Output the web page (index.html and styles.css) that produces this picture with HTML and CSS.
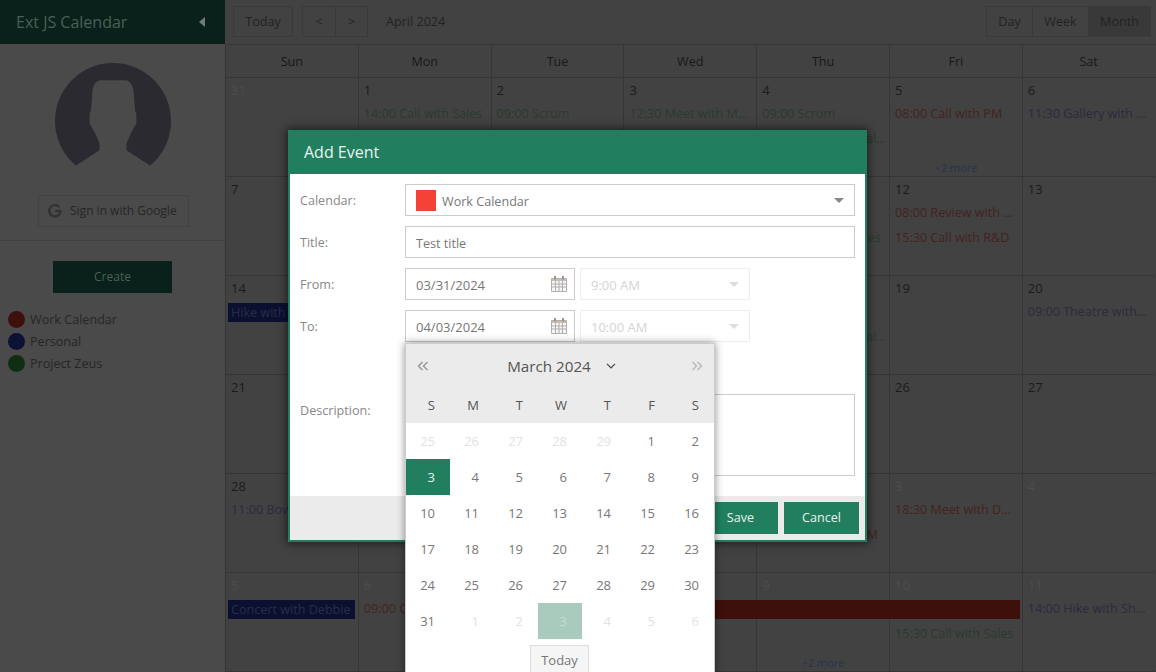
FILE: index.html
```html
<!DOCTYPE html>
<html lang="en">
<head>
    <meta charset="UTF-8">
    <title>Ext JS Calendar</title>
    <link rel="stylesheet" href="styles.css">
</head>
<body>
<div class="app">
    <div class="side">
        <div class="side-head">
            <span class="side-title">Ext JS Calendar</span>
            <span class="collapse"></span>
        </div>
        <div class="profile">
            <svg class="avatar" width="116" height="116" viewBox="0 0 116 116">
                <circle cx="58" cy="58" r="58" fill="#2a2a30"/>
                <path fill="#4a4a4a" d="M46 17.300H70C76 17.300 79 24 79 34L80 47.300 81.400 50.700V60.600L75.700 70.600 71.400 80.600V87.300L94.700 102.300V116H21.300V102.300L44.600 87.300V80.600L40.300 70.600 34.600 60.600V50.700L36 47.300 37 34C37 24 40 17.300 46 17.300Z"/>
            </svg>
            <div class="google-btn">
                <svg width="14" height="14" viewBox="0 0 14 14">
                    <path fill="none" stroke="#333" stroke-width="2.4" d="M11.200 3A5.700 5.700 0 1 0 12.600 7H7.200"/>
                </svg>
                <span>Sign in with Google</span>
            </div>
        </div>
        <div class="side-bottom">
            <div class="create-btn">Create</div>
            <ul class="legend">
                <li><i class="dot dot-red"></i>Work Calendar</li>
                <li><i class="dot dot-blue"></i>Personal</li>
                <li><i class="dot dot-green"></i>Project Zeus</li>
            </ul>
        </div>
    </div>

    <div class="main">
        <div class="toolbar">
            <div class="btn-group"><span class="tbtn today">Today</span></div>
            <div class="btn-group nav-group"><span class="tbtn nav">&lt;</span><span class="tbtn nav">&gt;</span></div>
            <span class="period">April 2024</span>
            <div class="btn-group views">
                <span class="tbtn view-day">Day</span><span class="tbtn view-week">Week</span><span class="tbtn view-month active">Month</span>
            </div>
        </div>
        <div class="week-head">
            <div>Sun</div><div>Mon</div><div>Tue</div><div>Wed</div><div>Thu</div><div>Fri</div><div>Sat</div>
        </div>
        <div class="month">
            <div class="day"><span class="num off">31</span></div>
            <div class="day"><span class="num">1</span><div class="ev g">14:00 Call with Sales</div></div>
            <div class="day"><span class="num">2</span><div class="ev g">09:00 Scrum</div></div>
            <div class="day"><span class="num">3</span><div class="ev g">12:30 Meet with Marketing</div></div>
            <div class="day"><span class="num">4</span><div class="ev g">09:00 Scrum</div><div class="ev g long">16:00 Meet with Salary review</div></div>
            <div class="day"><span class="num">5</span><div class="ev r">08:00 Call with PM</div><a class="more">+2 more</a></div>
            <div class="day"><span class="num">6</span><div class="ev b">11:30 Gallery with Susan</div></div>

            <div class="day"><span class="num">7</span></div>
            <div class="day"><span class="num">8</span></div>
            <div class="day"><span class="num">9</span></div>
            <div class="day"><span class="num">10</span></div>
            <div class="day"><span class="num">11</span><div class="ev g">09:00 Scrum</div><div class="ev g">15:30 Call with Sales</div></div>
            <div class="day"><span class="num">12</span><div class="ev r">08:00 Review with Team</div><div class="ev r">15:30 Call with R&amp;D</div></div>
            <div class="day"><span class="num">13</span></div>

            <div class="day"><span class="num">14</span><div class="ev fill-b">Hike with Sarah</div></div>
            <div class="day"><span class="num">15</span></div>
            <div class="day"><span class="num">16</span></div>
            <div class="day"><span class="num">17</span></div>
            <div class="day"><span class="num">18</span><div class="ev g">09:00 Scrum</div><div class="ev g long">16:00 Meet with Salary review</div></div>
            <div class="day"><span class="num">19</span></div>
            <div class="day"><span class="num">20</span><div class="ev b">09:00 Theatre with Debbie</div></div>

            <div class="day"><span class="num">21</span></div>
            <div class="day"><span class="num">22</span></div>
            <div class="day"><span class="num">23</span></div>
            <div class="day"><span class="num">24</span></div>
            <div class="day"><span class="num">25</span></div>
            <div class="day"><span class="num">26</span></div>
            <div class="day"><span class="num">27</span></div>

            <div class="day"><span class="num">28</span><div class="ev b">11:00 Bowling with Dan</div></div>
            <div class="day"><span class="num">29</span></div>
            <div class="day"><span class="num">30</span></div>
            <div class="day"><span class="num off">1</span></div>
            <div class="day"><span class="num off">2</span><div class="ev g">09:00 Scrum</div><div class="ev r">08:00 Meet with PM</div></div>
            <div class="day"><span class="num off">3</span><div class="ev r">18:30 Meet with Design</div></div>
            <div class="day"><span class="num off">4</span></div>

            <div class="day"><span class="num off">5</span><div class="ev fill-b">Concert with Debbie</div></div>
            <div class="day"><span class="num off">6</span><div class="ev r">09:00 Call with PM</div></div>
            <div class="day"><span class="num off">7</span><div class="ev fill-r wide">Conference</div></div>
            <div class="day"><span class="num off">8</span></div>
            <div class="day"><span class="num off">9</span><a class="more">+2 more</a></div>
            <div class="day"><span class="num off">10</span><div class="ev spacer"></div><div class="ev g">15:30 Call with Sales</div></div>
            <div class="day"><span class="num off">11</span><div class="ev b">14:00 Hike with Sharon</div></div>
        </div>
    </div>
</div>

<div class="dialog">
    <div class="dialog-head">Add Event</div>
    <div class="dialog-body">
        <div class="row">
            <label>Calendar:</label>
            <div class="input grow">
                <i class="swatch"></i><span>Work Calendar</span>
                <b class="arrow"></b>
            </div>
        </div>
        <div class="row">
            <label>Title:</label>
            <div class="input grow">Test title</div>
        </div>
        <div class="row">
            <label>From:</label>
            <div class="input date">03/31/2024
                <svg class="cal-icon" width="16" height="17" viewBox="0 0 16 17"><use href="#cal"/></svg>
            </div>
            <div class="input time">9:00 AM<b class="arrow"></b></div>
        </div>
        <div class="row">
            <label>To:</label>
            <div class="input date">04/03/2024
                <svg class="cal-icon" width="16" height="17" viewBox="0 0 16 17"><use href="#cal"/></svg>
            </div>
            <div class="input time">10:00 AM<b class="arrow"></b></div>
        </div>
        <div class="row"></div>
        <div class="row tall">
            <label>Description:</label>
            <div class="input grow"></div>
        </div>
    </div>
    <div class="dialog-foot">
        <span class="green-btn">Save</span>
        <span class="green-btn">Cancel</span>
    </div>
</div>

<div class="picker">
    <div class="picker-head">
        <div class="picker-title">
            <svg width="12" height="10" viewBox="0 0 12 10"><path fill="none" stroke="#999" stroke-width="1.500" d="M5.500 1 1.500 5l4 4M10.500 1l-4 4 4 4"/></svg>
            <span class="month-name">March 2024
                <svg width="10" height="6" viewBox="0 0 10 6"><path fill="none" stroke="#444" stroke-width="1.200" d="M1 .8l4 4 4-4"/></svg>
            </span>
            <svg width="12" height="10" viewBox="0 0 12 10"><path fill="none" stroke="#bbb" stroke-width="1.500" d="M1.500 1l4 4-4 4M6.500 1l4 4-4 4"/></svg>
        </div>
        <div class="picker-days">
            <span>S</span><span>M</span><span>T</span><span>W</span><span>T</span><span>F</span><span>S</span>
        </div>
    </div>
    <div class="picker-grid">
        <span class="out">25</span><span class="out">26</span><span class="out">27</span><span class="out">28</span><span class="out">29</span><span>1</span><span>2</span>
        <span class="sel">3</span><span>4</span><span>5</span><span>6</span><span>7</span><span>8</span><span>9</span>
        <span>10</span><span>11</span><span>12</span><span>13</span><span>14</span><span>15</span><span>16</span>
        <span>17</span><span>18</span><span>19</span><span>20</span><span>21</span><span>22</span><span>23</span>
        <span>24</span><span>25</span><span>26</span><span>27</span><span>28</span><span>29</span><span>30</span>
        <span>31</span><span class="out">1</span><span class="out">2</span><span class="out cur">3</span><span class="out">4</span><span class="out">5</span><span class="out">6</span>
    </div>
    <div class="picker-foot"><span class="today-btn">Today</span></div>
</div>

<svg class="defs" width="0" height="0">
    <symbol id="cal" viewBox="0 0 16 17">
        <path fill="#f4f6fa" d="M1 4h14v12H1z"/>
        <path fill="#c4bcb4" d="M1 3h14v3H1z"/>
        <path fill="none" stroke="#b4aea8" d="M.5 3.500h15v13H.5zM.5 9h15M.5 12h15M4.500 6v10M8 6v10M11.500 6v10"/>
        <path fill="none" stroke="#9a9590" stroke-width="2" d="M4 1v3.500M12 1v3.500"/>
    </symbol>
</svg>
</body>
</html>
```

FILE: styles.css
```css
*{
    margin: 0;
    padding: 0;
    box-sizing: border-box;
}
html, body{
    height: 100%;
    overflow: hidden;
}
body{
    position: relative;
    font-family: "Open Sans", "Noto Sans", sans-serif;
    font-size: 12.6px;
    color: #777;
    background: #424242;
}
.app{
    display: flex;
    height: 672px;
}

/* left column */
.side{
    width: 225px;
    flex: none;
    background: #4a4a4a;
}
.side-head{
    height: 44px;
    padding: 0 20px 0 16px;
    display: flex;
    align-items: center;
    justify-content: space-between;
    background: #09211a;
}
.side-title{
    font-size: 16px;
    color: #495f57;
}
.collapse{
    border-style: solid;
    border-width: 5px 6px 5px 0;
    border-color: transparent #6f7c78 transparent transparent;
}
.profile{
    height: 197px;
    padding-top: 19px;
    display: flex;
    flex-direction: column;
    align-items: center;
    border-bottom: 1px solid #404040;
}
.avatar{
    display: block;
    margin-left: 1px;
}
.google-btn{
    width: 151px;
    height: 32px;
    margin: 16px 0 0 2px;
    padding: 0 0 1px 9px;
    display: flex;
    align-items: center;
    gap: 8px;
    border: 1px solid #424242;
    color: #262626;
    font-size: 12px;
}
.side-bottom{
    padding: 20px 8px 0;
}
.create-btn{
    width: 119px;
    height: 32px;
    margin-left: 45px;
    background: #09211a;
    color: #495f57;
    line-height: 32px;
    text-align: center;
    font-size: 12px;
}
.legend{
    list-style: none;
    margin-top: 15px;
}
.legend li{
    height: 22px;
    display: flex;
    align-items: center;
    gap: 5px;
    color: #262626;
}
.dot{
    width: 17px;
    height: 17px;
    border-radius: 50%;
}
.dot-red{
    background: #3d100c;
}
.dot-blue{
    background: #0d1133;
}
.dot-green{
    background: #0f2e12;
}

/* calendar */
.main{
    flex: 1;
    min-width: 0;
    display: flex;
    flex-direction: column;
}
.toolbar{
    height: 44px;
    flex: none;
    padding: 6px 5px 7px 8px;
    display: flex;
    align-items: stretch;
    color: #222;
}
.btn-group{
    display: flex;
    border: 1px solid #3a3a3a;
}
.nav-group{
    margin-left: 9px;
}
.tbtn{
    display: flex;
    align-items: center;
    justify-content: center;
    border-left: 1px solid #3a3a3a;
}
.tbtn:first-child{
    border-left: 0;
}
.today{
    width: 58px;
}
.nav{
    width: 32px;
}
.period{
    margin-left: 18px;
    align-self: center;
}
.views{
    margin-left: auto;
}
.view-day{
    width: 45px;
}
.view-week{
    width: 56px;
}
.view-month{
    width: 62px;
}
.active{
    background: #393939;
}
.week-head{
    height: 34px;
    flex: none;
    display: grid;
    grid-template-columns: repeat(7, 132.8px);
    border-top: 1px solid #363636;
    border-bottom: 1px solid #363636;
}
.week-head div{
    border-left: 1px solid #363636;
    text-align: center;
    line-height: 33px;
    color: #181818;
}
.month{
    flex: 1;
    display: grid;
    grid-template-columns: repeat(7, 132.8px);
    grid-template-rows: repeat(5, 99px) 1fr;
}
.day{
    min-width: 0;
    display: flex;
    flex-direction: column;
    border-left: 1px solid #363636;
    border-bottom: 1px solid #363636;
}
.num{
    height: 25px;
    padding-left: 5px;
    line-height: 24px;
    color: #1b1b1b;
    font-size: 13px;
}
.num.off{
    color: #4d4d4d;
}
.ev{
    height: 19px;
    margin: 1px 3px 5px 2px;
    padding: 0 3px;
    line-height: 19px;
    white-space: nowrap;
    overflow: hidden;
    text-overflow: ellipsis;
}
.ev.long{
    margin-right: 0;
    padding-right: 0;
}
.g{
    color: #2a3a2c;
}
.b{
    color: #2a2b3e;
}
.r{
    color: #43231f;
}
.fill-b{
    margin: 2px 3px 4px 2px;
    background: #0c1030;
    color: #2a2d4a;
}
.fill-r{
    margin: 2px 3px 4px 2px;
    background: #3d100c;
    color: #3d100c;
}
.wide{
    position: relative;
    width: 526px;
}
.spacer{
    visibility: hidden;
}
.more{
    margin-top: auto;
    padding-bottom: 1px;
    text-align: center;
    font-size: 11px;
    color: #26334f;
}

/* add event window */
.dialog{
    position: absolute;
    left: 288px;
    top: 130px;
    width: 579px;
    height: 412px;
    display: flex;
    flex-direction: column;
    background: #217f5f;
    box-shadow: 0 0 8px 2px rgba(0, 0, 0, .5);
}
.dialog-head{
    height: 44px;
    flex: none;
    padding-left: 16px;
    line-height: 44px;
    font-size: 16px;
    color: #e8f3ef;
}
.dialog-body{
    flex: 1;
    margin: 0 2px;
    padding: 10px;
    display: flex;
    flex-direction: column;
    gap: 10px;
    background: #fff;
}
.row{
    height: 32px;
    flex: none;
    display: flex;
    gap: 5px;
}
.row.tall{
    height: 82px;
}
.row label{
    width: 100px;
    line-height: 34px;
    color: #888;
}
.input{
    position: relative;
    padding: 2px 0 0 10px;
    display: flex;
    align-items: center;
    border: 1px solid #ccc;
    line-height: 28px;
    color: #777;
}
.grow{
    flex: 1;
    padding-top: 3px;
}
.date{
    width: 170px;
    font-size: 13px;
}
.time{
    width: 170px;
    border-color: #eee;
    color: #d4d4d4;
    font-size: 13px;
}
.swatch{
    width: 20px;
    height: 21px;
    margin: -3px 6px 0 0;
    background: #f44336;
}
.arrow{
    position: absolute;
    right: 10px;
    top: 13px;
    border-style: solid;
    border-width: 5px 5px 0;
    border-color: #888 transparent transparent;
}
.time .arrow{
    border-top-color: #ddd;
}
.cal-icon{
    position: absolute;
    right: 7px;
    top: 6px;
}
.dialog-foot{
    height: 44px;
    flex: none;
    margin: 0 2px 2px;
    padding: 6px;
    display: flex;
    justify-content: flex-end;
    gap: 6px;
    background: #ebebeb;
}
.green-btn{
    width: 75px;
    background: #217f5f;
    color: #e8f3ef;
    line-height: 32px;
    text-align: center;
}

/* date picker popup */
.picker{
    position: absolute;
    left: 405px;
    top: 343px;
    width: 310px;
    height: 345px;
    border: 1px solid #ccc;
    background: #fff;
    box-shadow: 0 0 8px rgba(0, 0, 0, .45);
    font-size: 13px;
}
.picker-head{
    height: 79px;
    background: #ebebeb;
}
.picker-title{
    height: 43px;
    padding: 0 11px;
    display: flex;
    align-items: center;
    justify-content: space-between;
}
.month-name{
    margin-left: 3px;
    font-size: 15.2px;
    color: #555;
    display: flex;
    align-items: center;
    gap: 15px;
}
.picker-days, .picker-grid{
    display: grid;
    grid-template-columns: repeat(7, 44px);
    text-align: right;
}
.picker-days span{
    padding-right: 15px;
    line-height: 36px;
    color: #555;
}
.picker-grid span{
    height: 36px;
    padding-right: 15px;
    line-height: 36px;
    color: #777;
}
.picker-grid .out{
    color: #e2e2e2;
}
.picker-grid .sel{
    background: #217f5f;
    color: #e8f3ef;
}
.picker-grid .cur{
    background: #a9cbbd;
    color: #c4dcd2;
}
.picker-foot{
    padding: 6px 1px 0 0;
    text-align: center;
}
.today-btn{
    display: inline-block;
    width: 59px;
    height: 36px;
    border: 1px solid #ddd;
    background: #f5f5f5;
    line-height: 28px;
    color: #777;
}
.defs{
    position: absolute;
}
```
